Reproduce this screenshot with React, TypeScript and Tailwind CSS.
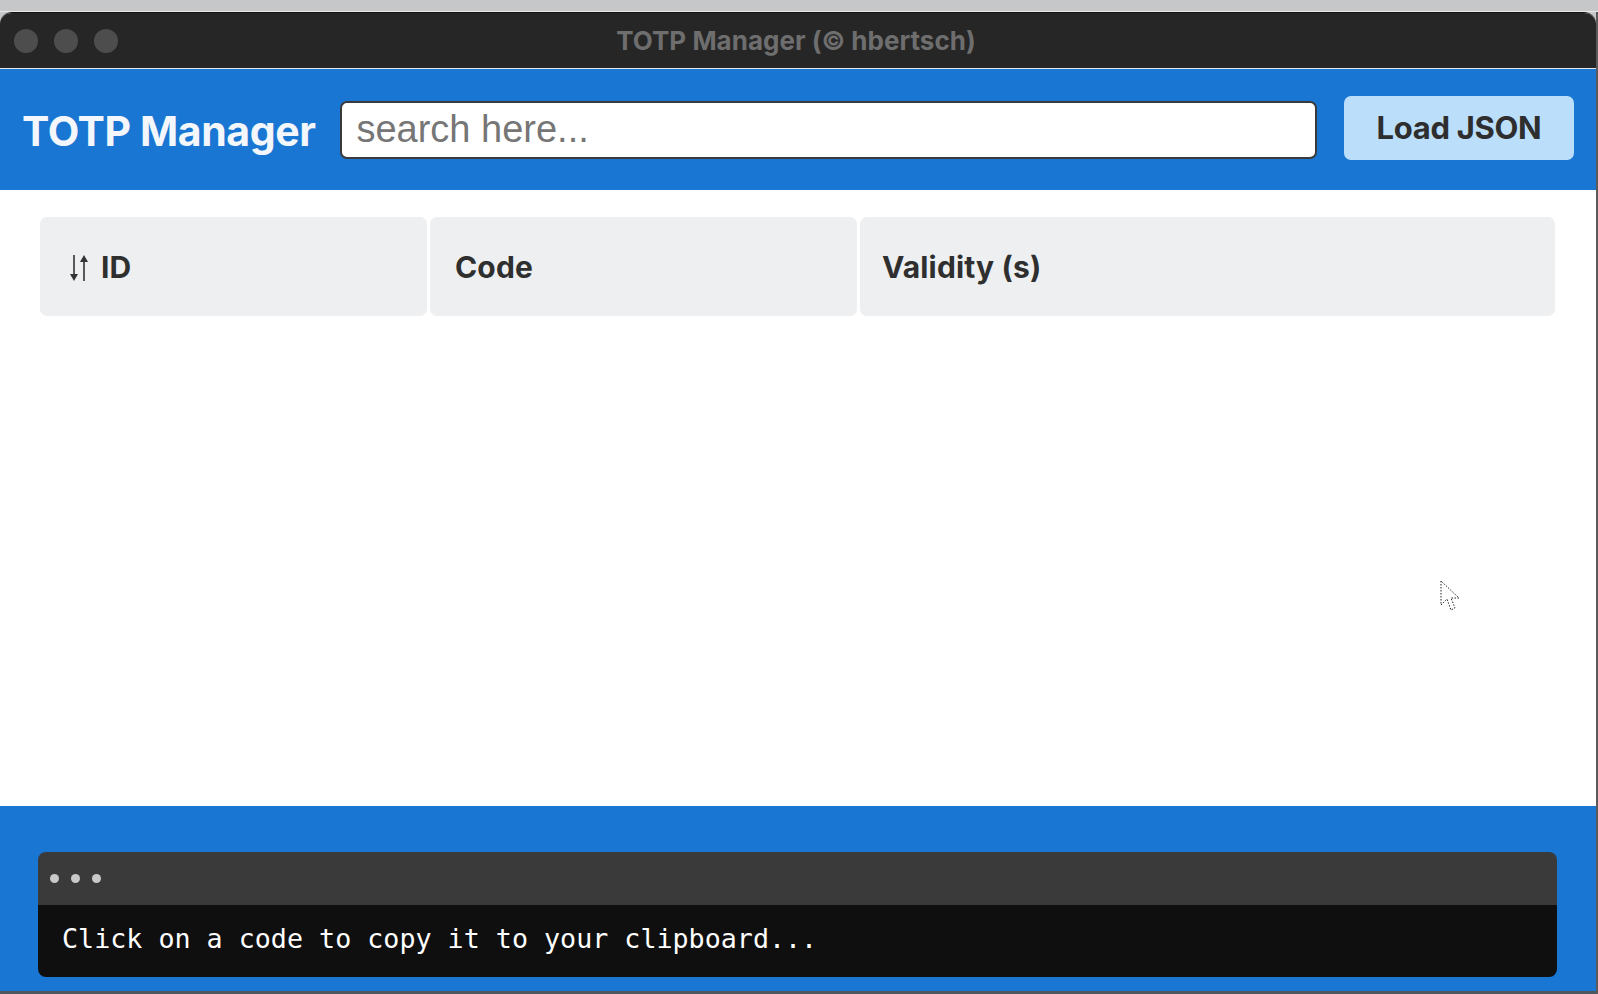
import React from "react";

function SortIcon() {
  return (
    <svg width="20" height="28" viewBox="0 0 20 28" fill="none" stroke="#333333" strokeWidth="1.6" strokeLinecap="butt">
      <line x1="5" y1="1" x2="5" y2="22" />
      <path d="M1 20 L5 27 L9 20 Z" fill="#333333" stroke="none" />
      <line x1="15" y1="6" x2="15" y2="27" />
      <path d="M11 8 L15 1 L19 8 Z" fill="#333333" stroke="none" />
    </svg>
  );
}

function Cursor() {
  return (
    <svg width="22" height="34" viewBox="0 0 22 34" className="absolute left-[1440px] top-[580px]">
      <path d="M1 1 L1 25 L7 19 L11 30 L15 28 L11 18 L19 18 Z" fill="#ffffff" stroke="#222222" strokeWidth="1" strokeDasharray="1.5 1.5" />
    </svg>
  );
}

export default function App() {
  return (
    <div className="relative w-[1598px] h-[994px] bg-[#c6c7c9] flex flex-col overflow-hidden">
      <div className="h-[12px] shrink-0 border-b border-[#e8e8e8]" />
      <div className="flex-1 flex flex-col mr-[2px] rounded-t-[12px] overflow-hidden bg-white border-t border-[#111]">
        {/* Title bar */}
        <div className="relative h-[56px] shrink-0 bg-[#262626] border-b border-[#e6e6e6] flex items-center">
          <div className="flex items-center gap-[16px] pl-[14px]">
            <div className="w-[24px] h-[24px] rounded-full bg-[#4d4d4d]" />
            <div className="w-[24px] h-[24px] rounded-full bg-[#4d4d4d]" />
            <div className="w-[24px] h-[24px] rounded-full bg-[#4d4d4d]" />
          </div>
          <div className="absolute inset-0 flex items-center justify-center pointer-events-none">
            <span className="font-['Inter',sans-serif] font-bold text-[26px] text-[#6e6e6e] ml-[-4px]">
              TOTP Manager (© hbertsch)
            </span>
          </div>
        </div>

        {/* Blue header */}
        <div className="h-[121px] shrink-0 bg-[#1976d2] flex items-center pl-[22px] pr-[22px]">
          <h1 className="font-['Inter',sans-serif] font-bold text-[41px] text-[#f3f6fa] tracking-[-0.01em] leading-none pt-[4px]">
            TOTP Manager
          </h1>
          <input
            className="ml-[25px] flex-1 h-[58px] rounded-[7px] border-2 border-[#3a3a3a] bg-white px-[14px] font-['Liberation_Sans',Arial,sans-serif] text-[38px] text-[#222] placeholder:text-[#767676] outline-none"
            placeholder="search here..."
          />
          <button className="ml-[27px] mb-[3px] w-[230px] h-[64px] rounded-[7px] bg-[#bbdefb] font-['Inter',sans-serif] font-bold text-[31px] text-[#2e2e2e] tracking-[-0.01em]">
            Load JSON
          </button>
        </div>

        {/* Body */}
        <div className="flex-1 bg-white pt-[27px] pl-[40px] pr-[41px]">
          <div className="flex gap-[3px] font-['Inter',sans-serif] font-bold text-[30px] text-[#2f2f2f] tracking-[0.005em]">
            <div className="w-[387px] h-[99px] rounded-[7px] bg-[#eeeff1] flex items-center pl-[29px] gap-[12px] pt-[2px]">
              <SortIcon />
              <span>ID</span>
            </div>
            <div className="w-[427px] h-[99px] rounded-[7px] bg-[#eeeff1] flex items-center pl-[25px] pt-[2px]">
              <span>Code</span>
            </div>
            <div className="flex-1 h-[99px] rounded-[7px] bg-[#eeeff1] flex items-center pl-[22px] pt-[2px]">
              <span>Validity (s)</span>
            </div>
          </div>
        </div>

        {/* Footer */}
        <div className="h-[185px] shrink-0 bg-[#1976d2] pt-[46px] pl-[38px] pr-[39px]">
          <div className="rounded-[8px] overflow-hidden">
            <div className="h-[53px] bg-[#3a3a3a] flex items-center gap-[12px] pl-[12px]">
              <div className="w-[9px] h-[9px] rounded-full bg-[#c9c9c9]" />
              <div className="w-[9px] h-[9px] rounded-full bg-[#c9c9c9]" />
              <div className="w-[9px] h-[9px] rounded-full bg-[#c9c9c9]" />
            </div>
            <div className="h-[72px] bg-[#0f0f0f] flex items-center pl-[24px] pb-[4px]">
              <span className="font-['DejaVu_Sans_Mono',monospace] text-[26.7px] text-white leading-none">
                Click on a code to copy it to your clipboard...
              </span>
            </div>
          </div>
        </div>
      </div>
      <div className="h-[3px] shrink-0 bg-[#4e565e]" />
      <div className="absolute right-0 top-[12px] bottom-0 w-[2px] bg-[#5a5a5a]" />
      <Cursor />
    </div>
  );
}
